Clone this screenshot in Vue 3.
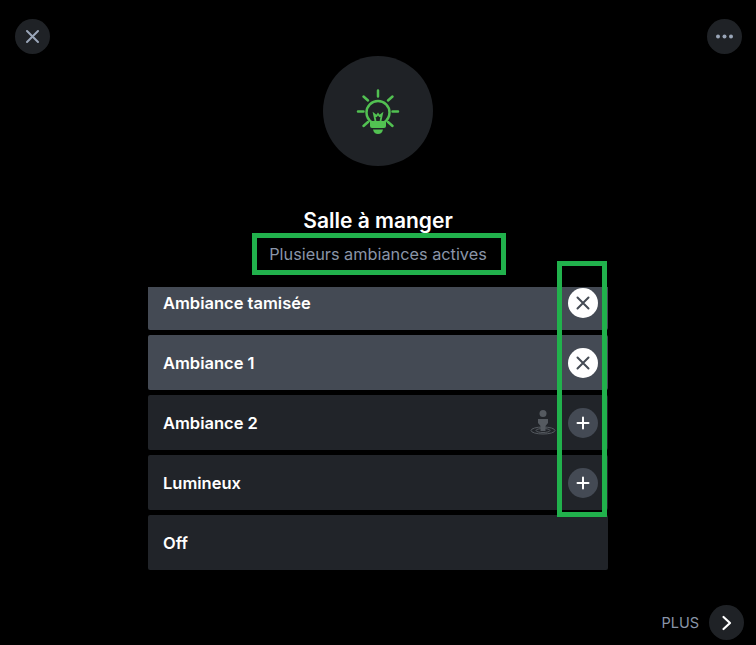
<template>
  <div class="screen">
    <header class="top-bar">
      <button class="round-btn">
        <svg width="17" height="17" viewBox="0 0 17 17"><path d="M3 3 14 14M14 3 3 14" stroke="#9aa6b8" stroke-width="2" stroke-linecap="round" /></svg>
      </button>
      <button class="round-btn">
        <svg width="19" height="5" viewBox="0 0 19 5"><circle cx="3" cy="2.5" r="2" fill="#9aa6b8" /><circle cx="9.5" cy="2.5" r="2" fill="#9aa6b8" /><circle cx="16" cy="2.5" r="2" fill="#9aa6b8" /></svg>
      </button>
    </header>

    <div class="bulb-wrap">
      <svg width="44" height="46" viewBox="0 0 44 46" fill="none" stroke="#52c152">
        <path d="M22 2.500V8.500M7.500 8.500 12 12.500M36.500 8.500 32 12.500M2 23.500H7.500M36.500 23.500H42M7.500 38 12 34M36.500 38 32 34" stroke-width="2.500" stroke-linecap="round" />
        <path d="M16 34.500C12.500 32 10.500 28.500 10.500 24.500A11.500 11.500 0 0 1 33.500 24.500C33.500 28.500 31.500 32 28 34.500" stroke-width="2.500" />
        <path d="M19.500 33 18 26 20.500 28 22 26 23.500 28 26 26 24.500 33" stroke-width="1.800" />
        <path d="M14 33H30V38Q30 40 28 40H16Q14 40 14 38Z" fill="#52c152" stroke="none" />
        <path d="M17 41.500H27Q26 46 22 46T17 41.500Z" fill="#52c152" stroke="none" />
      </svg>
    </div>

    <h1 class="title">Salle à manger</h1>
    <p class="subtitle">Plusieurs ambiances actives</p>

    <div class="list">
      <div
        v-for="scene in scenes"
        :key="scene.name"
        class="row"
        :class="{ active: scene.active }"
      >
        <span class="row-name">{{ scene.name }}</span>
        <svg v-if="scene.person" class="person" width="26" height="26" viewBox="0 0 26 26" fill="#555a60">
          <ellipse cx="13" cy="20.500" rx="12" ry="3.500" fill="none" stroke="#555a60" stroke-width="1" />
          <ellipse cx="13" cy="20.500" rx="7" ry="2" fill="none" stroke="#555a60" stroke-width="1" />
          <circle cx="13" cy="3.500" r="3.500" />
          <path d="M8 9H18V13L15.500 16V21H10.500V16L8 13Z" />
        </svg>
        <button v-if="scene.action === 'remove'" class="row-btn remove">
          <svg width="14" height="14" viewBox="0 0 14 14"><path d="M1.500 1.500 12.500 12.500M12.500 1.500 1.500 12.500" stroke="#454b55" stroke-width="2" stroke-linecap="round" /></svg>
        </button>
        <button v-if="scene.action === 'add'" class="row-btn add">
          <svg width="14" height="14" viewBox="0 0 14 14"><path d="M7 1.500V12.500M1.500 7H12.500" stroke="#fff" stroke-width="2" stroke-linecap="round" /></svg>
        </button>
      </div>
    </div>

    <footer class="more">
      <span class="more-label">PLUS</span>
      <button class="round-btn">
        <svg width="12" height="20" viewBox="0 0 12 20" fill="none"><path d="M2.500 4 9 10 2.500 16" stroke="#fff" stroke-width="2.200" stroke-linecap="round" stroke-linejoin="round" /></svg>
      </button>
    </footer>

    <!-- green annotation boxes drawn over the screenshot -->
    <div class="mark mark-subtitle"></div>
    <div class="mark mark-actions"></div>
  </div>
</template>

<script setup>
const scenes = [
  { name: 'Ambiance tamisée', active: true, action: 'remove' },
  { name: 'Ambiance 1', active: true, action: 'remove' },
  { name: 'Ambiance 2', action: 'add', person: true },
  { name: 'Lumineux', action: 'add' },
  { name: 'Off' }
]
</script>

<style>
html, body {
  margin: 0;
  background: #000;
}
</style>

<style scoped>
.screen {
  position: relative;
  width: 756px;
  height: 645px;
  overflow: hidden;
  background: #000;
  font-family: Inter, "Noto Sans", sans-serif;
  display: flex;
  flex-direction: column;
  align-items: center;
}

button {
  border: 0;
  padding: 0;
  display: flex;
  align-items: center;
  justify-content: center;
}

.top-bar {
  box-sizing: border-box;
  width: 100%;
  padding: 19px 14px 0 15px;
  display: flex;
  justify-content: space-between;
  height: 56px;
}

.round-btn {
  width: 35px;
  height: 35px;
  border-radius: 50%;
  background: #1f2226;
}

.bulb-wrap {
  width: 110px;
  height: 110px;
  border-radius: 50%;
  background: #1f2226;
  display: flex;
  align-items: center;
  justify-content: center;
}

.title {
  margin: 42px 0 0;
  height: 26px;
  line-height: 26px;
  font-size: 21px;
  font-weight: 600;
  color: #fff;
}

.subtitle {
  margin: 7px 0 0;
  height: 26px;
  line-height: 26px;
  font-size: 16.300px;
  color: #8a95a8;
}

.list {
  margin-top: 20px;
  width: 460px;
  height: 283px;
  overflow: hidden;
  display: flex;
  flex-direction: column;
  gap: 5px;
}

.row {
  flex: 0 0 55px;
  box-sizing: border-box;
  padding: 0 10px 0 15px;
  display: flex;
  align-items: center;
  gap: 12px;
  border-radius: 2px;
  background: #212429;
}

.row:first-child {
  margin-top: -12px;
}

.row.active {
  background: #444a54;
}

.row-name {
  flex: 1;
  font-size: 16.500px;
  font-weight: 600;
  color: #fff;
}

.row-btn {
  width: 30px;
  height: 30px;
  border-radius: 50%;
}

.remove {
  background: #fff;
}

.add {
  background: #444a54;
}

.more {
  position: absolute;
  right: 12px;
  bottom: 5px;
  display: flex;
  align-items: center;
  gap: 10px;
}

.more-label {
  font-size: 14.500px;
  color: #8a95a8;
}

.mark {
  position: absolute;
  box-sizing: border-box;
  border: 5px solid #21b14c;
}

.mark-subtitle {
  left: 252px;
  top: 233px;
  width: 254px;
  height: 42px;
}

.mark-actions {
  left: 557px;
  top: 261px;
  width: 50px;
  height: 256px;
}
</style>
